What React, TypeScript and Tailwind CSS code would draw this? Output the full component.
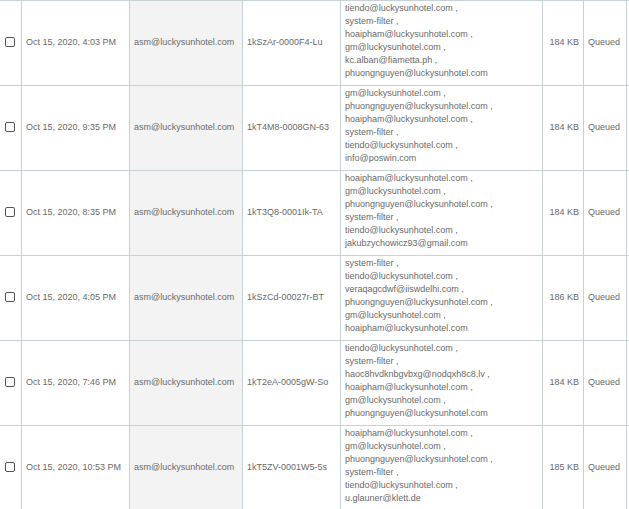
import React from 'react'

type Row = {
  date: string
  sender: string
  id: string
  recipients: string[]
  size: string
  status: string
}

const rows: Row[] = [
  {
    date: 'Oct 15, 2020, 4:03 PM',
    sender: 'asm@luckysunhotel.com',
    id: '1kSzAr-0000F4-Lu',
    recipients: [
      'tiendo@luckysunhotel.com',
      'system-filter',
      'hoaipham@luckysunhotel.com',
      'gm@luckysunhotel.com',
      'kc.alban@fiametta.ph',
      'phuongnguyen@luckysunhotel.com',
    ],
    size: '184 KB',
    status: 'Queued',
  },
  {
    date: 'Oct 15, 2020, 9:35 PM',
    sender: 'asm@luckysunhotel.com',
    id: '1kT4M8-0008GN-63',
    recipients: [
      'gm@luckysunhotel.com',
      'phuongnguyen@luckysunhotel.com',
      'hoaipham@luckysunhotel.com',
      'system-filter',
      'tiendo@luckysunhotel.com',
      'info@poswin.com',
    ],
    size: '184 KB',
    status: 'Queued',
  },
  {
    date: 'Oct 15, 2020, 8:35 PM',
    sender: 'asm@luckysunhotel.com',
    id: '1kT3Q8-0001Ik-TA',
    recipients: [
      'hoaipham@luckysunhotel.com',
      'gm@luckysunhotel.com',
      'phuongnguyen@luckysunhotel.com',
      'system-filter',
      'tiendo@luckysunhotel.com',
      'jakubzychowicz93@gmail.com',
    ],
    size: '184 KB',
    status: 'Queued',
  },
  {
    date: 'Oct 15, 2020, 4:05 PM',
    sender: 'asm@luckysunhotel.com',
    id: '1kSzCd-00027r-BT',
    recipients: [
      'system-filter',
      'tiendo@luckysunhotel.com',
      'veraqagcdwf@iiswdelhi.com',
      'phuongnguyen@luckysunhotel.com',
      'gm@luckysunhotel.com',
      'hoaipham@luckysunhotel.com',
    ],
    size: '186 KB',
    status: 'Queued',
  },
  {
    date: 'Oct 15, 2020, 7:46 PM',
    sender: 'asm@luckysunhotel.com',
    id: '1kT2eA-0005gW-So',
    recipients: [
      'tiendo@luckysunhotel.com',
      'system-filter',
      'haoc8hvdknbgvbxg@nodqxh8c8.lv',
      'hoaipham@luckysunhotel.com',
      'gm@luckysunhotel.com',
      'phuongnguyen@luckysunhotel.com',
    ],
    size: '184 KB',
    status: 'Queued',
  },
  {
    date: 'Oct 15, 2020, 10:53 PM',
    sender: 'asm@luckysunhotel.com',
    id: '1kT5ZV-0001W5-5s',
    recipients: [
      'hoaipham@luckysunhotel.com',
      'gm@luckysunhotel.com',
      'phuongnguyen@luckysunhotel.com',
      'system-filter',
      'tiendo@luckysunhotel.com',
      'u.glauner@klett.de',
    ],
    size: '185 KB',
    status: 'Queued',
  },
]

const cell = 'border-r border-[#c6d2d5] flex items-center px-1 pb-[2px] whitespace-nowrap overflow-hidden'

export default function App() {
  return (
    <div
      className="w-[629px] h-[509px] overflow-hidden bg-white text-[9px] leading-[13px] text-[#6a6a6a]"
      style={{ fontFamily: '"Liberation Sans", Arial, sans-serif' }}
    >
      <div className="border-t border-[#c6d2d5]">
        {rows.map((row) => (
          <div
            key={row.id}
            className="grid grid-cols-[22px_108px_113px_98px_202px_41px_43px_1fr] h-[85px] border-b border-[#c6d2d5]"
          >
            {/* checkbox */}
            <div className="border-r border-[#c6d2d5] flex items-center justify-center pr-[2px] pb-[2px]">
              <span className="block w-[10px] h-[10px] rounded-[2px] border-[1.5px] border-[#555] bg-white" />
            </div>
            <div className={cell}>{row.date}</div>
            <div className={`${cell} bg-[#f3f3f3]`}>{row.sender}</div>
            <div className={cell}>{row.id}</div>
            <div className="border-r border-[#c6d2d5] px-1 pt-[1px] whitespace-nowrap overflow-hidden">
              {row.recipients.map((r, i) => (
                <div key={i}>
                  {r}
                  {i < row.recipients.length - 1 ? ' ,' : ''}
                </div>
              ))}
            </div>
            <div className={`${cell} justify-end`}>{row.size}</div>
            <div className={cell}>{row.status}</div>
            <div />
          </div>
        ))}
      </div>
    </div>
  )
}
